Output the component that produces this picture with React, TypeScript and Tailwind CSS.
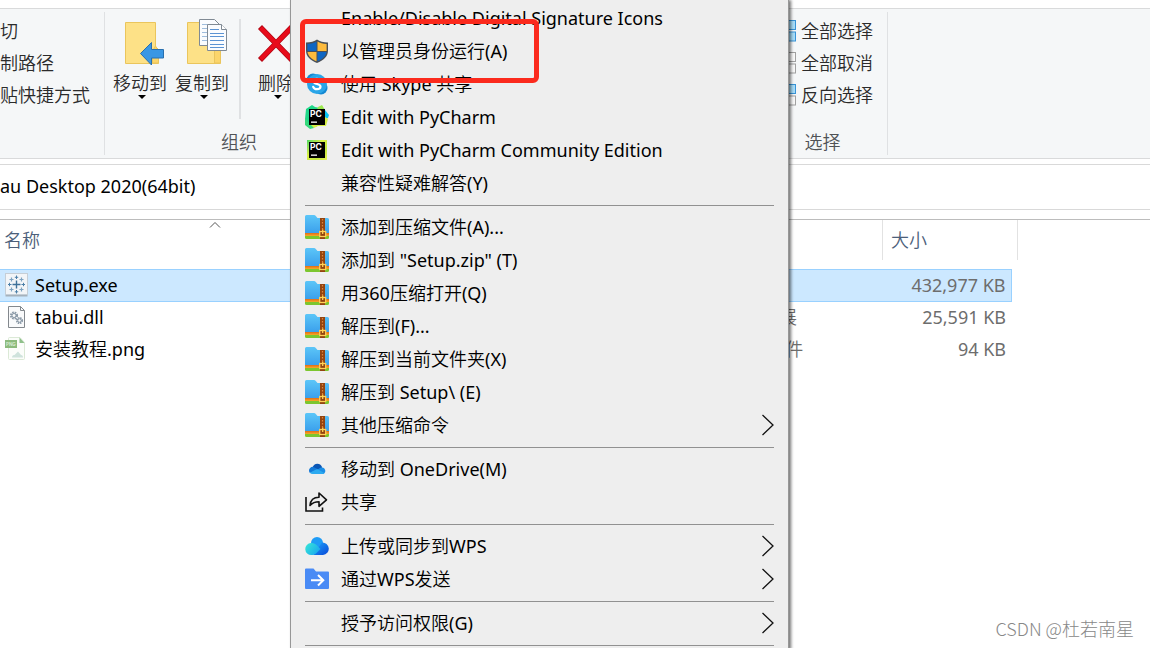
import React from "react";

type IconProps = { className?: string };

// MENU ICONS
const ShieldIcon: React.FC<IconProps> = () => (
  <svg width="24" height="24" viewBox="0 0 24 24">
    <path
      d="M12 0.500C9.500 2.300 5.500 3.500 1 3.500v8c0 6 4.500 10 11 12.500C18.500 21.500 23 17.500 23 11.500v-8C18.500 3.500 14.500 2.300 12 0.500z"
      fill="#4a5058"
    />
    <path d="M11.500 2.500C9 4 6 4.800 2.400 5V12h9.100z" fill="#0f66c3" />
    <path d="M12.500 2.500C15 4 18 4.800 21.600 5V12h-9.100z" fill="#fdbb3d" />
    <path d="M2.500 12.900h9v9.300C6.500 20 3 17 2.500 12.900z" fill="#fdbb3d" />
    <path d="M21.500 12.900h-9v9.300c5-2.200 8.500-5.200 9-9.300z" fill="#0f66c3" />
  </svg>
);

const SkypeIcon: React.FC<IconProps> = () => (
  <svg width="24" height="24" viewBox="0 0 24 24">
    <circle cx="8" cy="8" r="6.500" fill="#1388d2" />
    <circle cx="16" cy="16" r="6.500" fill="#1388d2" />
    <circle cx="12" cy="12" r="10" fill="#2aa5e8" />
    <path
      d="M15.500 8.500c-.8-1.300-2-1.700-3.500-1.700-2 0-3.500.8-3.500 2.500 0 3.500 7 2 7 5.200 0 1.700-1.500 2.700-3.500 2.700-1.800 0-3.200-.8-3.800-2.400"
      fill="none"
      stroke="#fff"
      strokeWidth="2.200"
      strokeLinecap="round"
    />
  </svg>
);

const PyCharmIcon: React.FC<IconProps> = () => (
  <svg width="24" height="24" viewBox="0 0 24 24">
    <path d="M1 4l6-4 3 2 10 2-3 10-6 8-6-1-5-7z" fill="#21d789" />
    <path d="M13 2l4-2 3 5-2 5-7-3z" fill="#9be84f" />
    <path d="M20 5l4 5-1 3-3 1z" fill="#07c3f2" />
    <path d="M3 18l5 1 8 1 4-8 3 2-2 7-8 0-4 2-6-3z" fill="#d5ee45" />
    <path d="M0 13l4 5 5 5-4 1-5-4z" fill="#35d97c" />
    <rect x="4" y="4" width="16" height="16" fill="#000" />
    <text x="5" y="11.800" fontSize="8.500" fontWeight="700" fontFamily="Inter, sans-serif" fill="#fff">
      PC
    </text>
    <rect x="6" y="16.500" width="6" height="1.300" fill="#fff" />
  </svg>
);

const PyCharmCommunityIcon: React.FC<IconProps> = () => (
  <svg width="24" height="24" viewBox="0 0 24 24">
    <defs>
      <linearGradient id="pcce" x1="0" y1="0" x2="1" y2="1">
        <stop offset="0" stopColor="#4fd866" />
        <stop offset="0.400" stopColor="#d9f046" />
        <stop offset="0.700" stopColor="#c3e83e" />
        <stop offset="1" stopColor="#e8f257" />
      </linearGradient>
    </defs>
    <rect x="2" y="2" width="20" height="20" fill="url(#pcce)" />
    <rect x="4" y="4" width="16" height="16" fill="#000" />
    <text x="5" y="11.800" fontSize="8.500" fontWeight="700" fontFamily="Inter, sans-serif" fill="#fff">
      PC
    </text>
    <rect x="6" y="16.500" width="6" height="1.300" fill="#fff" />
  </svg>
);

const ZipIcon: React.FC<IconProps> = () => (
  <svg width="24" height="24" viewBox="0 0 24 24">
    <defs>
      <linearGradient id="zip" x1="0" y1="0" x2="0" y2="1">
        <stop offset="0" stopColor="#5cc6f8" />
        <stop offset="1" stopColor="#3ba0ec" />
      </linearGradient>
    </defs>
    <path d="M0 15h24v7.500q0 1.500-1.500 1.500h-21Q0 24 0 22.500z" fill="#7cc62f" />
    <path d="M0 15h24v6H0z" fill="#f4a024" />
    <path d="M0 15h24v4.500H0z" fill="#e5761b" />
    <path d="M0 1.500Q0 0 1.500 0H9q1 0 2 1.200l1.500 1.800h10Q24 3 24 4.500V18H0z" fill="url(#zip)" />
    <rect x="15" y="3" width="5" height="21" fill="#93440f" />
    <path d="M17.500 4v12" stroke="#e0853d" strokeWidth="1.200" strokeDasharray="1.500 1.500" />
    <rect x="14.700" y="16.500" width="6" height="5" fill="#93440f" stroke="#ffd257" strokeWidth="1.300" />
    <path d="M17.700 14.500v4.500" stroke="#ffd257" strokeWidth="1.300" />
  </svg>
);

const OneDriveIcon: React.FC<IconProps> = () => (
  <svg width="24" height="24" viewBox="0 0 24 24">
    <path d="M7.500 10.500C8.300 8 10 6.700 12.300 6.700c2.400 0 4.300 1.400 4.900 3.800L12 14z" fill="#0a55b4" />
    <path d="M7.800 9.800C5.700 9.900 4 11.500 4 13.500c0 1 .4 2 1 2.600l8.500-3.700z" fill="#1379d8" />
    <path d="M15 11c3-1.500 5.300.7 5.300 3 0 1.600-1 2.700-2.600 3L12 13z" fill="#1b8ee6" />
    <path d="M4.800 15.800l6.300-3.200q1-.5 2 0l6.200 3.300c-.5.700-1.200 1.100-2.300 1.100H7.800c-1.300 0-2.300-.4-3-1.200z" fill="#2caaf0" />
  </svg>
);

const ShareIcon: React.FC<IconProps> = () => (
  <svg width="24" height="24" viewBox="0 0 24 24" fill="none" stroke="#111" strokeWidth="1.600">
    <path d="M1 7v14h16.500v-3.500" />
    <path d="M5 15.500C5.500 10 9 7.300 14 7.300V3l7.500 6.800-7.500 6.500v-4.500c-4 0-6.500 1-9 3.700z" strokeLinejoin="round" />
  </svg>
);

const WpsCloudIcon: React.FC<IconProps> = () => (
  <svg width="24" height="24" viewBox="0 0 24 24">
    <defs>
      <linearGradient id="wpsLeft" x1="0" y1="0.200" x2="1" y2="0.800">
        <stop offset="0" stopColor="#35e3d8" />
        <stop offset="1" stopColor="#18a4f0" />
      </linearGradient>
      <linearGradient id="wpsRight" x1="0" y1="0" x2="1" y2="1">
        <stop offset="0" stopColor="#20a6fb" />
        <stop offset="1" stopColor="#0747d8" />
      </linearGradient>
    </defs>
    <circle cx="12" cy="9" r="6" fill="#1e9bf6" />
    <path d="M17 8.500a6.200 6.200 0 0 1 1 12.500H8z" fill="url(#wpsRight)" />
    <path d="M6 9c3.500 0 5 1.500 7.500 4l2 2-4 4c-1.500 1.500-3 2-5 2A6 6 0 0 1 6 9z" fill="url(#wpsLeft)" />
  </svg>
);

const WpsSendIcon: React.FC<IconProps> = () => (
  <svg width="24" height="24" viewBox="0 0 24 24">
    <path d="M0 2.500Q0 1.500 1 1.500h7.500L11 4.500h12q1 0 1 1V21q0 1-1 1H1q-1 0-1-1z" fill="#4a8bf5" />
    <path d="M6 13.300h12M13 8l5.300 5.300L13 18.500" fill="none" stroke="#fff" strokeWidth="2" />
  </svg>
);

const ChevronIcon: React.FC<IconProps> = () => (
  <svg width="12" height="22" viewBox="0 0 12 22" fill="none" stroke="#111" strokeWidth="1.300">
    <path d="M0.500 1l10.500 10L0.500 21" />
  </svg>
);

// RIBBON ICONS
const MoveToIcon: React.FC<IconProps> = () => (
  <svg className="overflow-visible" width="44" height="48" viewBox="0 0 44 48">
    <path d="M7.500 3.500h30v24l3 3v14h-33z" fill="#fde187" stroke="#eac55c" />
    <path d="M34.500 32l3-5 3 5v12h-6z" fill="#fbd56b" stroke="#eac55c" />
    <path d="M22.500 34.500L33.500 23.500v7h12v8.500h-12v7z" fill="#3a97e4" stroke="#286fae" />
  </svg>
);

const CopyToIcon: React.FC<IconProps> = () => (
  <svg className="overflow-visible" width="44" height="48" viewBox="0 0 44 48">
    <path d="M7.500 3.500h30v24l3 3v14h-33z" fill="#fde187" stroke="#eac55c" />
    <path d="M34.500 31h6v13h-6z" fill="#fbd56b" stroke="#eac55c" />
    <path d="M19.500.500h15l5 5v21h-20z" fill="#fafcfe" stroke="#808a94" />
    <path d="M22 5.500h11M22 9.500h6M22 13.500h5M22 17.500h5M22 21.500h5" stroke="#9fbddd" />
    <path d="M27.500 5.500h14l5 5v21h-19z" fill="#fafcfe" stroke="#808a94" />
    <path d="M41.500 5.500v5h5" fill="#fff" stroke="#808a94" />
    <path d="M30 10.500h9M30 14.500h14M30 17.500h14M30 21.500h14M30 25.500h14M30 28.500h14" stroke="#5b93d3" />
  </svg>
);

const DeleteIcon: React.FC<IconProps> = () => (
  <svg className="overflow-visible" width="44" height="48" viewBox="0 0 44 48">
    <path d="M6 8l32 33M38 8L6 41" stroke="#b10613" strokeWidth="5.600" />
    <path d="M6.700 8.700l30.600 31.600M37.300 8.700L6.700 40.300" stroke="#e80c1b" strokeWidth="4.200" />
  </svg>
);

const SelectIcon: React.FC<{ top: boolean; bottom: boolean }> = ({ top, bottom }) => (
  <svg width="22" height="22" viewBox="0 0 22 22">
    {[0.5, 11.5].map((x) => (
      <g key={x}>
        <rect x={x} y="0.500" width="9" height="9" fill={top ? "#a6dcf8" : "#f8f8f8"} stroke={top ? "#3893d6" : "#a0a0a0"} />
        <rect x={x} y="12" width="9" height="9" fill={bottom ? "#a6dcf8" : "#f8f8f8"} stroke={bottom ? "#3893d6" : "#a0a0a0"} />
      </g>
    ))}
  </svg>
);

// FILE ICONS
const SetupIcon: React.FC<IconProps> = () => (
  <svg width="24" height="24" viewBox="0 0 24 24">
    <rect x="0.500" y="1.500" width="22" height="22" fill="#a5b1bc" />
    <rect x="0.500" y="0.500" width="22" height="21" fill="#f2f5f8" stroke="#c5ced6" />
    <path d="M11.500 7.500v8M7.500 11.500h8" stroke="#3f7199" strokeWidth="1.400" />
    <path
      d="M11.500 2.500v3.500M9.800 4.300h3.400M11.500 17v3.500M9.800 18.800h3.400M3 11.500h3.500M4.500 9.800v3.400M16.500 11.500H20M18.500 9.800v3.400"
      stroke="#4b7fa8"
    />
    <path d="M6.500 4.500v4M4.500 6.500h4M16.500 4.500v4M14.500 6.500h4M6.500 14.500v4M4.500 16.500h4M16.500 14.500v4M14.500 16.500h4" stroke="#7da3c2" strokeWidth="1.200" />
  </svg>
);

const DllIcon: React.FC<IconProps> = () => (
  <svg width="24" height="24" viewBox="0 0 24 24">
    <path d="M3.500 1.500h12l4 4v17h-16z" fill="#f9fafb" stroke="#83888d" />
    <path d="M15.500 1.500v4h4" fill="none" stroke="#83888d" />
    <circle cx="9" cy="10.500" r="3" fill="none" stroke="#8b9aa8" strokeWidth="2.200" strokeDasharray="1.600 0.800" />
    <circle cx="9" cy="10.500" r="2" fill="none" stroke="#8b9aa8" />
    <circle cx="14.500" cy="15.500" r="2.600" fill="none" stroke="#8b9aa8" strokeWidth="2" strokeDasharray="1.400 0.700" />
    <circle cx="14.500" cy="15.500" r="1.700" fill="none" stroke="#8b9aa8" />
  </svg>
);

const PngIcon: React.FC<IconProps> = () => (
  <svg width="24" height="24" viewBox="0 0 24 24">
    <path d="M3.500 1.500q0-1 1-1H15l4.500 5v16q0 1-1 1h-14q-1 0-1-1z" fill="#fbfdfa" stroke="#dbe9d6" />
    <path d="M14.500.500l5 5.500h-5z" fill="#8fc08a" />
    <rect x="0" y="3" width="12" height="8" fill="#8cbb7d" />
    <text x="1" y="9" fontSize="4.500" fontWeight="700" fontFamily="Inter, sans-serif" fill="#d6ead0">
      PNG
    </text>
    <path d="M7 20.500c0-2 1.500-2.500 2.500-2.500l3.500-3.500 3 3.500c1.500 0 2 1 2 2.500z" fill="#cfe3dc" />
  </svg>
);

type MenuEntry = { icon?: React.ReactNode; name: string; submenu?: boolean };

const menuGroups: MenuEntry[][] = [
  [
    { name: "Enable/Disable Digital Signature Icons" },
    { icon: <ShieldIcon />, name: "以管理员身份运行(A)" },
    { icon: <SkypeIcon />, name: "使用 Skype 共享" },
    { icon: <PyCharmIcon />, name: "Edit with PyCharm" },
    { icon: <PyCharmCommunityIcon />, name: "Edit with PyCharm Community Edition" },
    { name: "兼容性疑难解答(Y)" },
  ],
  [
    { icon: <ZipIcon />, name: "添加到压缩文件(A)..." },
    { icon: <ZipIcon />, name: '添加到 "Setup.zip" (T)' },
    { icon: <ZipIcon />, name: "用360压缩打开(Q)" },
    { icon: <ZipIcon />, name: "解压到(F)..." },
    { icon: <ZipIcon />, name: "解压到当前文件夹(X)" },
    { icon: <ZipIcon />, name: "解压到 Setup\\ (E)" },
    { icon: <ZipIcon />, name: "其他压缩命令", submenu: true },
  ],
  [
    { icon: <OneDriveIcon />, name: "移动到 OneDrive(M)" },
    { icon: <ShareIcon />, name: "共享" },
  ],
  [
    { icon: <WpsCloudIcon />, name: "上传或同步到WPS", submenu: true },
    { icon: <WpsSendIcon />, name: "通过WPS发送", submenu: true },
  ],
  [{ name: "授予访问权限(G)", submenu: true }],
];

const files = [
  { icon: <SetupIcon />, name: "Setup.exe", type: "", size: "432,977 KB", selected: true },
  { icon: <DllIcon />, name: "tabui.dll", type: "应用程序扩展", size: "25,591 KB", selected: false },
  { icon: <PngIcon />, name: "安装教程.png", type: "PNG 图片文件", size: "94 KB", selected: false },
];

const RibbonButton: React.FC<{ icon: React.ReactNode; name: string }> = ({ icon, name }) => (
  <button className="flex w-[62px] flex-col items-center">
    {icon}
    <span className="mt-1 leading-6 whitespace-nowrap">{name}</span>
    <svg className="ml-1" width="8" height="4" viewBox="0 0 8 4">
      <path d="M0 0h8L4 4z" fill="#000" />
    </svg>
  </button>
);

const Ribbon: React.FC = () => (
  <div className="mt-2 flex border-y border-[#d9dadb] bg-[#f5f7f8] py-[3px] text-[#2b2b2b]">
    <div className="flex h-[143px] w-[105px] shrink-0 flex-col items-start border-r border-[#dfe1e3] pt-[3px]">
      <button className="h-8">切</button>
      <button className="h-8">制路径</button>
      <button className="h-8">贴快捷方式</button>
    </div>
    <div className="flex w-[268px] shrink-0 flex-col">
      <div className="flex flex-1 items-start pt-[7px] pl-1">
        <RibbonButton icon={<MoveToIcon />} name="移动到" />
        <RibbonButton icon={<CopyToIcon />} name="复制到" />
        <div className="ml-[6px] h-[100px] w-[2px] bg-[#dfe1e3]" />
        <div className="ml-1">
          <RibbonButton icon={<DeleteIcon />} name="删除" />
        </div>
      </div>
      <span className="pb-px text-center text-[#505356]">组织</span>
    </div>
    <div className="ml-[385px] flex w-[130px] shrink-0 flex-col border-r border-[#dfe1e3]">
      <div className="flex flex-1 flex-col items-start pt-[3px] pl-[17px]">
        <button className="flex h-8 items-center gap-1 whitespace-nowrap">
          <SelectIcon top bottom />
          全部选择
        </button>
        <button className="flex h-8 items-center gap-1 whitespace-nowrap">
          <SelectIcon top={false} bottom={false} />
          全部取消
        </button>
        <button className="flex h-8 items-center gap-1 whitespace-nowrap">
          <SelectIcon top bottom={false} />
          反向选择
        </button>
      </div>
      <span className="pb-px text-center text-[#505356]">选择</span>
    </div>
  </div>
);

const FileTable: React.FC = () => (
  <table className="w-[1018px] table-fixed border-collapse text-left">
    <colgroup>
      <col className="w-[430px]" />
      <col className="w-[452px]" />
      <col className="w-[129px]" />
      <col />
    </colgroup>
    <thead>
      <tr className="h-[49px] align-top text-[#4c607a]">
        <th className="p-0 font-normal">
          <div className="flex h-2 items-center justify-center">
            <svg width="12" height="7" viewBox="0 0 12 7" fill="none" stroke="#555">
              <path d="M1 6.500l5-5 5 5" />
            </svg>
          </div>
          <div className="pl-1">名称</div>
        </th>
        <th className="p-0" />
        <th className="p-0 font-normal" colSpan={2}>
          <div className="h-10 border-x border-[#e2e2e2] pt-2 pl-2">大小</div>
        </th>
      </tr>
    </thead>
    <tbody>
      {files.map((file) => {
        const cell = file.selected ? "bg-[#cce8ff] border-y border-[#99d1ff]" : "";
        return (
          <tr key={file.name} className="h-8">
            <td className={`p-0 ${cell}`}>
              <div className="flex items-center gap-[6px] pl-[5px]">
                {file.icon}
                {file.name}
              </div>
            </td>
            <td className={`p-0 pl-[259px] text-[#6d6d6d] ${cell}`}>{file.type}</td>
            <td className={`p-0 pr-[5px] text-right text-[#6d6d6d] ${cell} ${file.selected ? "border-r" : ""}`}>
              {file.size}
            </td>
            <td className="p-0" />
          </tr>
        );
      })}
    </tbody>
  </table>
);

const ContextMenu: React.FC = () => (
  <div className="absolute top-0 left-[290px] w-[499px] border-x border-[#979797] bg-[#eeeeee] pt-px text-black shadow-[2px_0_3px_rgba(0,0,0,0.55)]">
    {menuGroups.map((group, i) => (
      <div key={i}>
        {group.map((entry) => (
          <button key={entry.name} className="flex h-[33px] w-full items-center gap-3 px-[14px] text-left">
            <span className="w-6 shrink-0">{entry.icon}</span>
            <span className="flex-1 whitespace-nowrap">{entry.name}</span>
            {entry.submenu && <ChevronIcon />}
          </button>
        ))}
        <div className="px-[14px] pt-[6px] pb-1">
          <div className="h-px bg-[#919191]" />
        </div>
      </div>
    ))}
  </div>
);

const App: React.FC = () => {
  return (
    <div className="relative h-screen overflow-hidden bg-white font-['Noto_Sans','Noto_Sans_CJK_SC_DemiLight','Noto_Sans_CJK_SC_Light','Noto_Sans_CJK_SC',sans-serif] text-[18px] leading-6 text-black">
      <Ribbon />
      <div className="mt-[5px] flex h-[46px] items-center border-y border-[#d9d9d9] pb-[2px] whitespace-nowrap">
        au Desktop 2020(64bit)
      </div>
      <div className="mt-[9px] border-t border-[#bcbcbc]">
        <FileTable />
      </div>

      <ContextMenu />

      {/* highlight around "run as administrator" */}
      <div className="absolute top-[19px] left-[300px] h-[64px] w-[239px] rounded-md border-[5px] border-[#fb2a1d]" />

      <div className="absolute right-4 bottom-2 font-['Noto_Sans_CJK_SC',sans-serif] font-light text-[#888]">
        CSDN @杜若南星
      </div>
    </div>
  );
};

export default App;
